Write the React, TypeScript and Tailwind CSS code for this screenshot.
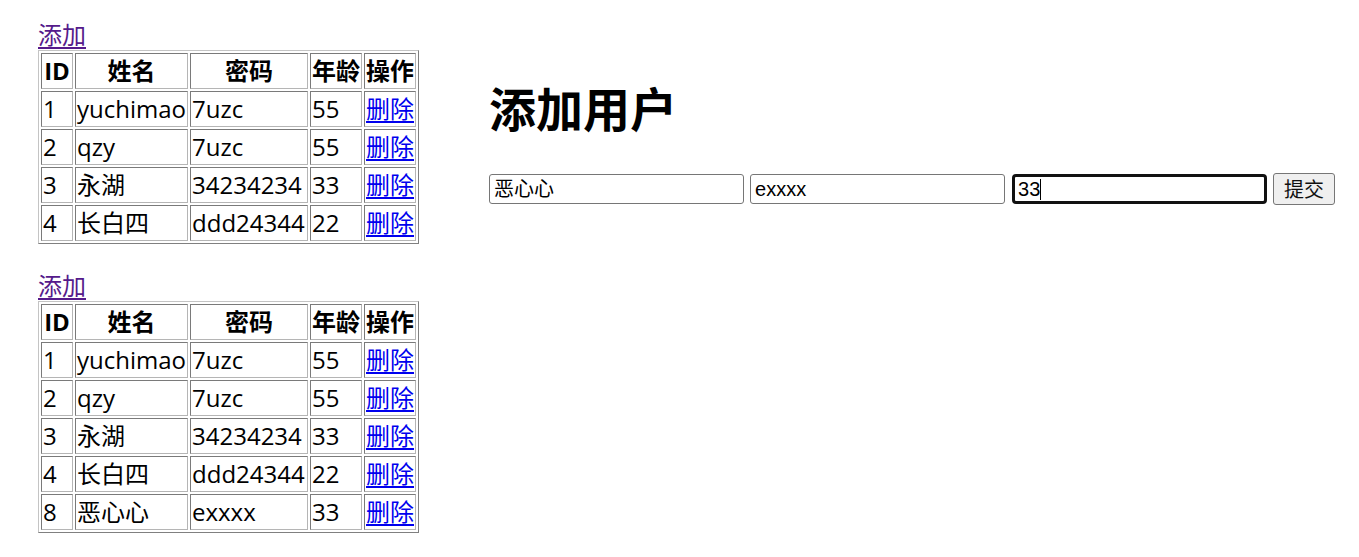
const rows1 = [
  { id: 1, name: "yuchimao", pwd: "7uzc", age: 55 },
  { id: 2, name: "qzy", pwd: "7uzc", age: 55 },
  { id: 3, name: "永湖", pwd: "34234234", age: 33 },
  { id: 4, name: "长白四", pwd: "ddd24344", age: 22 },
];

const rows2 = [...rows1, { id: 8, name: "恶心心", pwd: "exxxx", age: 33 }];

type User = { id: number; name: string; pwd: string; age: number };

const cell =
  "border border-t-[#7a7a7a] border-l-[#7a7a7a] border-r-[#b5b5b5] border-b-[#b5b5b5] px-[1px] py-[1px] leading-[32px] whitespace-nowrap overflow-visible";

function UserTable({ users }: { users: User[] }) {
  return (
    <div>
      <a href="#" className="block text-[24px] leading-[30px] text-[#551a8b] underline underline-offset-[3px]">
        添加
      </a>
      <table className="table-fixed border-separate border-spacing-[2px] border border-t-[#c4c4c4] border-l-[#c4c4c4] border-r-[#808080] border-b-[#808080] text-[24px] text-black">
        <thead>
          <tr>
            <th className={`${cell} w-[32px] font-bold text-center`}>ID</th>
            <th className={`${cell} w-[113px] font-bold text-center`}>姓名</th>
            <th className={`${cell} w-[118px] font-bold text-center`}>密码</th>
            <th className={`${cell} w-[52px] font-bold text-center`}>年龄</th>
            <th className={`${cell} w-[52px] font-bold text-center`}>操作</th>
          </tr>
        </thead>
        <tbody>
          {users.map((u) => (
            <tr key={u.id}>
              <td className={cell}>{u.id}</td>
              <td className={cell}>{u.name}</td>
              <td className={cell}>{u.pwd}</td>
              <td className={cell}>{u.age}</td>
              <td className={cell}>
                <a href="#" className="text-[#0000ee] underline underline-offset-[3px]">
                  删除
                </a>
              </td>
            </tr>
          ))}
        </tbody>
      </table>
    </div>
  );
}

export default function App() {
  return (
    <div className="min-h-[557px] bg-white flex items-start">
      {/* left: user lists */}
      <div className="ml-[38px] pt-[20px] flex flex-col gap-[27px] font-['Open_Sans','Noto_Sans_CJK_SC',sans-serif]">
        <UserTable users={rows1} />
        <UserTable users={rows2} />
      </div>

      {/* right: add form */}
      <div className="ml-[70px] pt-[75px] font-['Liberation_Sans','Noto_Sans_CJK_SC',sans-serif]">
        <h1 className="text-[47px] leading-[64px] font-bold text-black font-['Noto_Sans_CJK_SC',sans-serif]">添加用户</h1>
        <div className="mt-[34px] flex items-center gap-[6px]">
          <input
            defaultValue="恶心心"
            className="w-[255px] h-[30px] border border-[#767676] rounded-[3px] px-[4px] text-[20px] text-black bg-white outline-none font-['Liberation_Sans','Noto_Sans_CJK_SC',sans-serif]"
          />
          <input
            defaultValue="exxxx"
            className="w-[255px] h-[30px] border border-[#767676] rounded-[3px] px-[4px] text-[20px] text-black bg-white outline-none font-['Liberation_Sans','Noto_Sans_CJK_SC',sans-serif]"
          />
          <div className="relative ml-[1px]">
            <input
              defaultValue="33"
              className="w-[255px] h-[30px] border-[3px] border-[#111111] rounded-[4px] px-[3px] text-[20px] text-black bg-white outline-none font-['Liberation_Sans','Noto_Sans_CJK_SC',sans-serif]"
            />
            <span className="absolute left-[28px] top-[5px] w-[1px] h-[21px] bg-black" />
          </div>
          <button className="w-[62px] h-[32px] border border-[#767676] rounded-[3px] bg-[#efefef] text-[20px] text-[#111] font-['Noto_Sans_CJK_SC',sans-serif] leading-none">
            提交
          </button>
        </div>
      </div>
    </div>
  );
}
